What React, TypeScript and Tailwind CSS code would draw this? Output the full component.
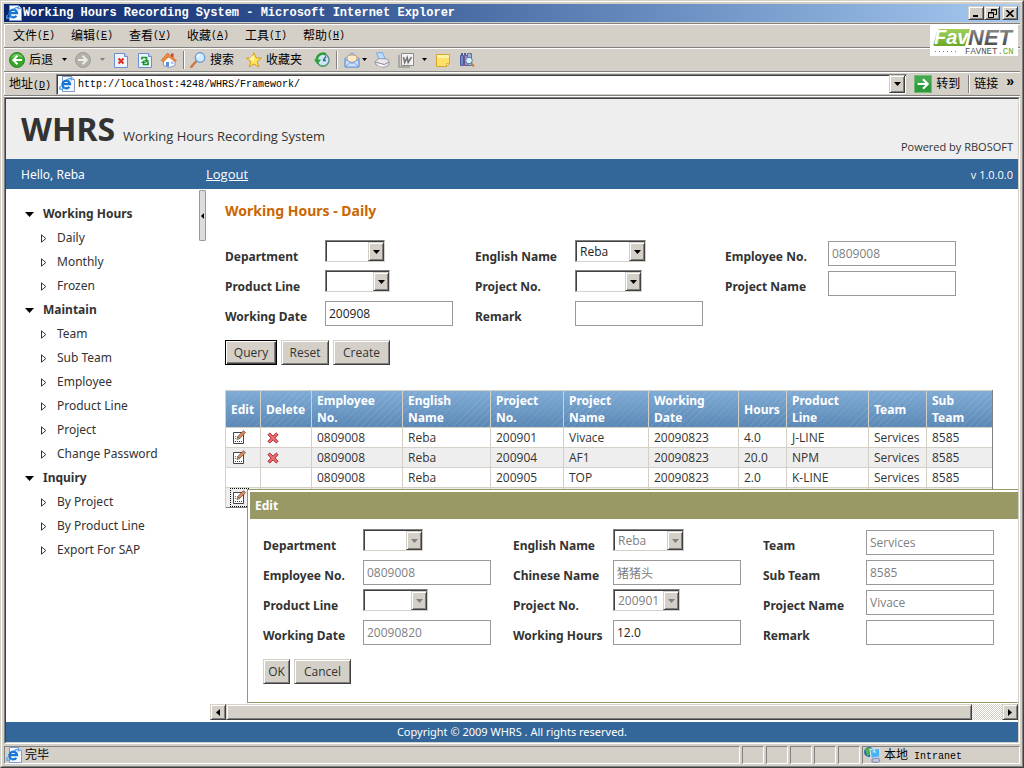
import React from "react";

const raised =
  "border border-t-[#d4d0c8] border-l-[#d4d0c8] border-r-[#404040] border-b-[#404040] bg-[#d4d0c8] shadow-[inset_1px_1px_0_#ffffff,inset_-1px_-1px_0_#808080]";
const sunken =
  "border border-t-[#808080] border-l-[#808080] border-r-[#d4d0c8] border-b-[#d4d0c8] bg-white shadow-[inset_1px_1px_0_#404040]";
const band = "flex h-6 items-center border-t border-[#808080] whitespace-nowrap shadow-[inset_0_1px_0_#ffffff,inset_1px_0_0_#ffffff]";
const noto = "font-['Noto_Sans','Noto_Sans_CJK_SC',sans-serif]";

/* ---------- icons ---------- */

function IEPage() {
  return (
    <svg width="16" height="16" viewBox="0 0 16 16" className="shrink-0">
      <path d="M3.500.5h9l3 3v12h-12z" fill="#f6f9ff" stroke="#7f9bd0" />
      <path d="M12.500.5v3h3" fill="#cfdcf5" stroke="#7f9bd0" />
      <path d="M10.300 10.800a3.800 3.800 0 1 1 .7-2.600H3.500" fill="none" stroke="#1874d2" strokeWidth="2.300" />
      <path d="M1.500 10C-1 14.500 2.500 14 6 11.800M7.500 4.300c3-2.300 5.500-2.800 4.500.2" fill="none" stroke="#4ba3ee" strokeWidth="1.300" />
    </svg>
  );
}

function BackIcon() {
  return (
    <svg width="16" height="16" viewBox="0 0 16 16" className="shrink-0">
      <circle cx="8" cy="8" r="7.500" fill="#3aa52d" stroke="#2b8a22" />
      <path d="M2 6a6.500 6.500 0 0 1 12 0c-3-2-8-2-12 0z" fill="#8fdc7c" opacity=".7" />
      <path d="M8.500 3.800 4.300 8l4.200 4.200M4.800 8H13" fill="none" stroke="#fff" strokeWidth="2" />
    </svg>
  );
}

function ForwardIcon() {
  return (
    <svg width="16" height="16" viewBox="0 0 16 16" className="shrink-0">
      <circle cx="8" cy="8" r="7.500" fill="#b4b1aa" stroke="#a09d96" />
      <path d="M7.500 3.800 11.700 8l-4.200 4.200M11.200 8H3" fill="none" stroke="#eeece7" strokeWidth="2" />
    </svg>
  );
}

function StopIcon() {
  return (
    <svg width="14" height="16" viewBox="0 0 14 16" className="shrink-0">
      <path d="M.5 1.500h10l3 3v11H.5z" fill="#eef4ff" stroke="#6d8fd2" />
      <path d="M10.500 1.500v3h3" fill="#c4d5f5" stroke="#6d8fd2" />
      <path d="m4.500 6.500 5 5m0-5-5 5" stroke="#e0301e" strokeWidth="2.200" />
    </svg>
  );
}

function RefreshIcon() {
  return (
    <svg width="14" height="16" viewBox="0 0 14 16" className="shrink-0">
      <path d="M.5 1.500h10l3 3v11H.5z" fill="#eef4ff" stroke="#6d8fd2" />
      <path d="M10.500 1.500v3h3" fill="#c4d5f5" stroke="#6d8fd2" />
      <path d="M4 7.500V5.500h4.500v3M10 9.500v3H5.500v-2" fill="none" stroke="#16962b" strokeWidth="1.700" />
      <path d="M5.800 8h5.400L8.500 10.500zM2.800 11h5.400L5.500 8.500z" fill="#16962b" />
    </svg>
  );
}

function HomeIcon() {
  return (
    <svg width="16" height="16" viewBox="0 0 16 16" className="shrink-0">
      <path d="M2.500 8.500v5l6 2 5.500-2V8L9 4z" fill="#fbfbff" stroke="#8b9bc4" />
      <path d="M10 1.500h2.500v4H10z" fill="#c8452b" />
      <path d="M0 8.500 6.500 1l9 7.500-1.800 1L7.500 4.800 2.500 10z" fill="#f0883a" stroke="#d0672a" strokeWidth=".6" />
      <path d="M5 10h3v5L5 14z" fill="#5b8fd8" />
      <path d="M10 9.500h2.500V12H10z" fill="#a5c8f2" />
    </svg>
  );
}

function SearchIcon() {
  return (
    <svg width="16" height="16" viewBox="0 0 16 16" className="shrink-0">
      <path d="M1.200 14.800 6 9.500" stroke="#c77b47" strokeWidth="2.500" strokeLinecap="round" />
      <circle cx="10" cy="5.500" r="4.700" fill="#d3ecff" stroke="#6d9ddb" strokeWidth="1.400" />
      <path d="M7.500 5A3 3 0 0 1 10 2.500" stroke="#fff" strokeWidth="1.500" fill="none" />
    </svg>
  );
}

function StarIcon() {
  return (
    <svg width="16" height="16" viewBox="0 0 16 16" className="shrink-0">
      <path d="m8 .8 2 5 5.400.3-4.200 3.500 1.500 5.400L8 12l-4.700 3 1.500-5.400L.6 6.100 6 5.800z" fill="#ffe45c" stroke="#d99a1c" />
      <path d="M8 3v6L3 7z" fill="#fff6b0" />
    </svg>
  );
}

function HistoryIcon() {
  return (
    <svg width="16" height="16" viewBox="0 0 16 16" className="shrink-0">
      <circle cx="9" cy="8" r="6" fill="#cfe6f5" stroke="#5f8f9c" strokeWidth="1.500" />
      <path d="M9 8.500l3-4M9 8.500h3" stroke="#35668c" strokeWidth="1.300" />
      <path d="M3 9A6 6 0 0 1 12 2.500" fill="none" stroke="#2ba03c" strokeWidth="2.600" />
      <path d="M0 7.500h7L3.500 12.500z" fill="#2ba03c" />
      <path d="M5 13c2 1.800 6 1.800 8-.5" fill="none" stroke="#58a868" strokeWidth="1.500" />
    </svg>
  );
}

function MailIcon() {
  return (
    <svg width="16" height="16" viewBox="0 0 16 16" className="shrink-0">
      <path d="M1 6.500 8 1l7 5.500V15H1z" fill="#b9d6f8" stroke="#6f97d0" />
      <path d="M3.500 3.500h9V10h-9z" fill="#ffe9c4" stroke="#d9a066" strokeWidth=".7" />
      <path d="M1.200 7 8 11.500 14.800 7v8H1.200z" fill="#c9e0ff" stroke="#6f97d0" />
      <path d="m1.500 14.500 5-4m8 4-5-4" stroke="#6f97d0" strokeWidth=".8" />
    </svg>
  );
}

function PrinterIcon() {
  return (
    <svg width="16" height="16" viewBox="0 0 16 16" className="shrink-0">
      <path d="m2.500 1 6-.5 2.500 6-6 1.500z" fill="#bcdcff" stroke="#6c9ad8" strokeWidth=".8" />
      <path d="M1 9.500 5 6.500l8.500.5 1.500 3v3l-5 2.500-8.500-3z" fill="#e8e8ec" stroke="#8c8c98" strokeWidth=".8" />
      <path d="m1.200 10 9 2.500L15 10" fill="none" stroke="#8c8c98" />
      <path d="M4 12.500 9 14" stroke="#fff" strokeWidth="1.500" />
    </svg>
  );
}

function WordIcon() {
  return (
    <svg width="16" height="16" viewBox="0 0 16 16" className="shrink-0">
      <path d="M3.500 1.500h12v12h-12z" fill="#f4f4f4" stroke="#8b8b8b" />
      <path d="M1 3v12h11" fill="none" stroke="#9b9b9b" strokeWidth="1.500" />
      <path d="m5.500 5 1.200 5.500L9.200 5.500l1 5L13.500 5" fill="none" stroke="#777" strokeWidth="1.600" />
    </svg>
  );
}

function NoteIcon() {
  return (
    <svg width="16" height="16" viewBox="0 0 16 16" className="shrink-0">
      <path d="M1.500 2.500h13v9l-3 3h-10z" fill="#ffe169" stroke="#d9a52c" />
      <path d="M14.500 11.500h-3v3z" fill="#fff7c9" stroke="#d9a52c" strokeWidth=".8" />
      <path d="M2 3h12v3H2z" fill="#fff3a8" />
    </svg>
  );
}

function ResearchIcon() {
  return (
    <svg width="16" height="16" viewBox="0 0 16 16" className="shrink-0">
      <path d="M1.500 3.500h3v10h-3z" fill="#7487c8" stroke="#4a5c9d" />
      <path d="M2 1h2v2H2zM5 1h2v2H5z" fill="#4a5c9d" />
      <path d="M5.500 3.500h3v10h-3z" fill="#a58cc0" stroke="#6b5591" />
      <path d="M8.500 1.500h4v12h-4z" fill="#9fb4dd" stroke="#58709f" />
      <circle cx="10" cy="8.500" r="3.300" fill="#d8f3ff" stroke="#4e7ba7" />
      <path d="m12.500 11.500 2.500 3" stroke="#c88332" strokeWidth="2" />
    </svg>
  );
}

function GoIcon() {
  return (
    <svg width="18" height="18" viewBox="0 0 18 18" className="shrink-0">
      <path d="M.5.5h17v17H.5z" fill="#2f9a3b" stroke="#6fba74" />
      <path d="M1 1h16v7H1z" fill="#55b35e" opacity=".6" />
      <path d="M9 4.200 13.800 9 9 13.800M13 9H3.500" fill="none" stroke="#fff" strokeWidth="2" />
    </svg>
  );
}

function IntranetIcon() {
  return (
    <svg width="17" height="16" viewBox="0 0 17 16" className="shrink-0">
      <circle cx="5" cy="5" r="4.900" fill="#2259c4" />
      <path d="M1 3c2-3 5-3 6-1L5 5l1 3-3 1z" fill="#46b648" />
      <path d="m6 2.500 9.500-1.500.5 9-9 1.500z" fill="#49b2f5" stroke="#d5daec" strokeWidth="1.300" />
      <path d="m8 5 3-2.500L12 6z" fill="#b8e6ff" />
      <path d="m8 12 6.500-1 1.500 3-3 1.500-5-.5z" fill="#c3c6e2" stroke="#7177a5" strokeWidth=".8" />
    </svg>
  );
}

function EditIcon() {
  return (
    <svg width="13" height="14" viewBox="0 0 13 14">
      <path d="M.5 2.500h10v11H.5z" fill="#fff" stroke="#444" />
      <path d="M2 11.500h1m1 0h1m1 0h1m1 0h1" stroke="#444" />
      <path d="M2 6.500h1M2 8.500h1" stroke="#777" />
      <path d="m4 9.500.7-2.700L6.500 8.700z" fill="#ffe79a" stroke="#444" strokeWidth=".7" />
      <path d="M4.800 6.500 10.500.7l2 2-5.900 5.800z" fill="#dd8a5c" stroke="#7b4a35" strokeWidth=".8" />
    </svg>
  );
}

function DeleteIcon() {
  return (
    <svg width="12" height="12" viewBox="0 0 12 12">
      <path d="M1 2.700 2.700 1 6 4.200 9.300 1 11 2.700 7.800 6 11 9.300 9.300 11 6 7.800 2.700 11 1 9.300 4.200 6z" fill="#f27070" stroke="#a8202c" strokeWidth="1" />
    </svg>
  );
}

function Caret({ className = "fill-black" }: { className?: string }) {
  return (
    <svg width="7" height="4" viewBox="0 0 7 4" className={"shrink-0 " + className}>
      <path d="M0 0h7L3.500 4z" />
    </svg>
  );
}

function SmallCaret({ className = "fill-black" }: { className?: string }) {
  return (
    <svg width="5" height="3" viewBox="0 0 5 3" className={"shrink-0 " + className}>
      <path d="M0 0h5L2.500 3z" />
    </svg>
  );
}

function FavnetLogo() {
  return (
    <svg width="88" height="31" viewBox="0 0 88 31" role="img" aria-label="FavNET">
      <defs>
        <linearGradient id="netFill" x1="0" y1="0" x2="0" y2="1">
          <stop offset="0" stopColor="#9a9a9a" />
          <stop offset="1" stopColor="#3b3b3b" />
        </linearGradient>
        <linearGradient id="favFill" x1="0" y1="0" x2="0" y2="1">
          <stop offset="0" stopColor="#9fd05c" />
          <stop offset="1" stopColor="#6aa829" />
        </linearGradient>
      </defs>
      <rect width="88" height="31" fill="#fff" />
      <path d="M10 4h30l-5 17H5q-2 0-1.500-2L7 6q.5-2 3-2z" fill="url(#favFill)" />
      <text x="4" y="19" className="font-['Liberation_Sans',sans-serif] text-[20px] font-bold italic" fill="#fff">Fav</text>
      <text x="38" y="20" className="font-['Liberation_Sans',sans-serif] text-[22px] font-bold italic" fill="url(#netFill)">NET</text>
      <path d="M5 26.500h24" stroke="#888" strokeDasharray="1 3" />
      <text x="35" y="29" className="font-['Liberation_Mono',monospace] text-[9px]" fill="#555">
        FAVNET<tspan fill="#6aa829">.CN</tspan>
      </text>
    </svg>
  );
}

/* ---------- browser chrome ---------- */

function Mono({ children }: { children: React.ReactNode }) {
  return <span className="font-['Liberation_Mono','Noto_Sans_CJK_SC',monospace] text-[10px]">{children}</span>;
}

function Divider() {
  return <span className="h-[18px] w-[2px] border-l border-r border-l-[#808080] border-r-white" />;
}

function TitleBar() {
  return (
    <header className="flex h-[18px] items-center gap-px bg-gradient-to-r from-[#0a246a] to-[#a6caf0] pr-[2px] pl-[2px]">
      <IEPage />
      <h1 className="flex-1 truncate font-['Liberation_Mono',monospace] text-xs leading-[18px] font-bold text-white">
        Working Hours Recording System - Microsoft Internet Explorer
      </h1>
      <div className="flex">
        <button aria-label="Minimize" className={"flex h-[14px] w-4 items-center justify-center " + raised}>
          <svg width="8" height="8" viewBox="0 0 8 8"><path d="M1 6h5v2H1z" /></svg>
        </button>
        <button aria-label="Restore" className={"flex h-[14px] w-4 items-center justify-center " + raised}>
          <svg width="9" height="9" viewBox="0 0 9 9">
            <path d="M3.500 2.500v-2h5v5h-2M.5 3.500h5v5h-5z M3 1h6M0 4h6" fill="none" stroke="#000" />
          </svg>
        </button>
        <button aria-label="Close" className={"ml-[2px] flex h-[14px] w-4 items-center justify-center " + raised}>
          <svg width="8" height="7" viewBox="0 0 8 7"><path d="m.5 0 7 7m0-7-7 7" stroke="#000" strokeWidth="1.600" /></svg>
        </button>
      </div>
    </header>
  );
}

const menus = [
  ["文件", "F"],
  ["编辑", "E"],
  ["查看", "V"],
  ["收藏", "A"],
  ["工具", "T"],
  ["帮助", "H"],
];

function MenuBar() {
  return (
    <nav className={band + " gap-4 pl-[9px]"}>
      {menus.map(([label, key]) => (
        <button key={key} className="flex w-[42px] shrink-0 items-center">
          {label}
          <Mono>(<span className="underline">{key}</span>)</Mono>
        </button>
      ))}
    </nav>
  );
}

function ToolBar() {
  return (
    <div className={band + " pl-[5px]"}>
      <button className="flex items-center gap-1"><BackIcon />后退</button>
      <SmallCaret className="mr-px ml-[9px] fill-black" />
      <button aria-label="Forward" className="ml-[7px]"><ForwardIcon /></button>
      <SmallCaret className="ml-[9px] fill-[#808080]" />
      <button aria-label="Stop" className="ml-[9px]"><StopIcon /></button>
      <button aria-label="Refresh" className="ml-[10px]"><RefreshIcon /></button>
      <button aria-label="Home" className="mr-[6px] ml-[9px]"><HomeIcon /></button>
      <Divider />
      <button className="ml-[5px] flex items-center gap-1"><SearchIcon />搜索</button>
      <button className="ml-3 flex items-center gap-1"><StarIcon />收藏夹</button>
      <button aria-label="History" className="mr-[6px] ml-3"><HistoryIcon /></button>
      <Divider />
      <button aria-label="Mail" className="ml-[6px] flex items-center gap-[2px]"><MailIcon /><SmallCaret /></button>
      <button aria-label="Print" className="ml-[7px]"><PrinterIcon /></button>
      <button aria-label="Edit with Word" className="ml-2 flex items-center gap-2"><WordIcon /><SmallCaret /></button>
      <button aria-label="Note" className="ml-2"><NoteIcon /></button>
      <button aria-label="Research" className="ml-2"><ResearchIcon /></button>
    </div>
  );
}

function AddressBar() {
  return (
    <div className={band + " pt-px pl-[5px]"}>
      <label htmlFor="address" className="w-[47px] shrink-0">地址<Mono>(<span className="underline">D</span>)</Mono></label>
      <div className={"flex h-[21px] flex-1 items-center p-px pl-[2px] " + sunken}>
        <IEPage />
        <input
          id="address"
          defaultValue="http://localhost:4248/WHRS/Framework/"
          className="ml-[3px] h-4 min-w-0 flex-1 bg-transparent font-['Liberation_Mono',monospace] text-[10px] outline-none"
        />
        <button aria-label="Address list" className={"flex h-[18px] w-4 items-center justify-center " + raised}>
          <Caret />
        </button>
      </div>
      <button className="ml-[7px] flex items-center gap-1"><GoIcon />转到</button>
      <span className="mr-1 ml-2 flex"><Divider /></span>
      <button className="mr-2">链接</button>
      <button aria-label="More links" className="mr-[6px] self-start text-sm leading-4 font-bold">»</button>
    </div>
  );
}

function StatusBar() {
  const cell = "border border-t-[#808080] border-l-[#808080] border-r-white border-b-white";
  return (
    <footer className="mt-[2px] flex h-[18px] gap-[2px]">
      <div className={"flex flex-1 items-center gap-[3px] pl-px " + cell}><IEPage />完毕</div>
      {[0, 1, 2, 3, 4].map((n) => (
        <div key={n} className={"w-[22px] " + cell} />
      ))}
      <div className={"flex w-[158px] items-center gap-[3px] pl-px " + cell}>
        <IntranetIcon />
        <span>本地<Mono>&nbsp;Intranet</Mono></span>
      </div>
    </footer>
  );
}

/* ---------- form parts ---------- */

type FieldSpec = {
  label: string;
  kind: "select" | "input";
  value?: string;
  width?: string;
  disabled?: boolean;
};

function Field({ id, spec }: { id: string; spec: FieldSpec }) {
  const tone = spec.disabled ? "text-[#808080]" : "text-[#222]";
  return (
    <>
      <label htmlFor={id} className={"pt-2 leading-[18px] font-bold whitespace-nowrap " + noto}>{spec.label}</label>
      {spec.kind === "select" ? (
        <div className={"relative h-[22px] " + spec.width}>
          <select
            id={id}
            disabled={spec.disabled}
            defaultValue={spec.value ?? ""}
            className={"h-full w-full appearance-none rounded-none pt-px pl-1 text-xs leading-[18px] opacity-100 outline-none " + sunken + " " + tone}
          >
            <option value={spec.value ?? ""}>{spec.value ?? ""}</option>
          </select>
          <span className={"pointer-events-none absolute top-[2px] right-px flex h-[19px] w-4 items-center justify-center " + raised}>
            <Caret className={spec.disabled ? "fill-[#808080]" : "fill-black"} />
          </span>
        </div>
      ) : (
        <input
          id={id}
          disabled={spec.disabled}
          defaultValue={spec.value}
          className={"mt-px h-[25px] w-32 border border-[#999] bg-white px-[3px] text-xs outline-none " + tone}
        />
      )}
    </>
  );
}

function Form({ name, fields }: { name: string; fields: FieldSpec[] }) {
  return (
    <div className="grid auto-rows-[30px] grid-cols-[100px_150px_100px_150px_103px_128px] items-start">
      {fields.map((f, i) => (
        <Field key={i} id={name + "-" + i} spec={f} />
      ))}
    </div>
  );
}

const queryFields: FieldSpec[] = [
  { label: "Department", kind: "select", width: "w-[60px]" },
  { label: "English Name", kind: "select", value: "Reba", width: "w-[71px]" },
  { label: "Employee No.", kind: "input", value: "0809008", disabled: true },
  { label: "Product Line", kind: "select", width: "w-[65px]" },
  { label: "Project No.", kind: "select", width: "w-[67px]" },
  { label: "Project Name", kind: "input" },
  { label: "Working Date", kind: "input", value: "200908" },
  { label: "Remark", kind: "input" },
];

const editFields: FieldSpec[] = [
  { label: "Department", kind: "select", width: "w-[60px]", disabled: true },
  { label: "English Name", kind: "select", value: "Reba", width: "w-[71px]", disabled: true },
  { label: "Team", kind: "input", value: "Services", disabled: true },
  { label: "Employee No.", kind: "input", value: "0809008", disabled: true },
  { label: "Chinese Name", kind: "input", value: "猪猪头", disabled: true },
  { label: "Sub Team", kind: "input", value: "8585", disabled: true },
  { label: "Product Line", kind: "select", width: "w-[65px]", disabled: true },
  { label: "Project No.", kind: "select", value: "200901", width: "w-[67px]", disabled: true },
  { label: "Project Name", kind: "input", value: "Vivace", disabled: true },
  { label: "Working Date", kind: "input", value: "20090820", disabled: true },
  { label: "Working Hours", kind: "input", value: "12.0" },
  { label: "Remark", kind: "input" },
];

/* ---------- application ---------- */

const tree = [
  { title: "Working Hours", items: ["Daily", "Monthly", "Frozen"] },
  { title: "Maintain", items: ["Team", "Sub Team", "Employee", "Product Line", "Project", "Change Password"] },
  { title: "Inquiry", items: ["By Project", "By Product Line", "Export For SAP"] },
];

function Sidebar() {
  return (
    <nav className={"w-[193px] shrink-0 pt-[13px] pl-[19px] " + noto}>
      {tree.map((group) => (
        <section key={group.title}>
          <h3 className="flex h-6 items-center gap-[9px] font-bold">
            <svg width="9" height="5" viewBox="0 0 9 5"><path d="M0 0h9L4.500 5z" /></svg>
            {group.title}
          </h3>
          <ul>
            {group.items.map((item) => (
              <li key={item} className="flex h-6 items-center gap-[10px] pl-4">
                <svg width="6" height="9" viewBox="0 0 6 9">
                  <path d="M.5.800v7.400L4.800 4.500z" fill="none" stroke="#333" />
                </svg>
                <a href="#">{item}</a>
              </li>
            ))}
          </ul>
        </section>
      ))}
    </nav>
  );
}

const columns = [
  { title: "Edit", width: "w-[35px]" },
  { title: "Delete", width: "w-[51px]" },
  { title: "Employee No.", width: "w-[91px]" },
  { title: "English Name", width: "w-[88px]" },
  { title: "Project No.", width: "w-[73px]" },
  { title: "Project Name", width: "w-[85px]" },
  { title: "Working Date", width: "w-[90px]" },
  { title: "Hours", width: "w-[48px]" },
  { title: "Product Line", width: "w-[82px]" },
  { title: "Team", width: "w-[58px]" },
  { title: "Sub Team", width: "w-[66px]" },
];

const rows = [
  { editable: true, removable: true, cells: ["0809008", "Reba", "200901", "Vivace", "20090823", "4.0", "J-LINE", "Services", "8585"] },
  { editable: true, removable: true, cells: ["0809008", "Reba", "200904", "AF1", "20090823", "20.0", "NPM", "Services", "8585"] },
  { editable: false, removable: false, cells: ["0809008", "Reba", "200905", "TOP", "20090823", "2.0", "K-LINE", "Services", "8585"] },
  { editable: true, removable: false, focused: true, cells: ["", "", "", "", "", "", "", "", ""] },
];

function ResultTable() {
  return (
    <table className="mt-[25px] w-[767px] table-fixed border-collapse border border-t-[#d4d0c8] border-r-[#808080] border-b-[#808080] border-l-[#d4d0c8]">
      <colgroup>
        {columns.map((c) => (
          <col key={c.title} className={c.width} />
        ))}
      </colgroup>
      <thead className="bg-[repeating-linear-gradient(135deg,rgba(255,255,255,0.08)_0px_1px,transparent_1px_5px),linear-gradient(#7fabd6,#5a87b4)]">
        <tr className="h-[37px]">
          {columns.map((c) => (
            <th key={c.title} className={"border-r border-[#d4d0c8] px-[5px] text-left leading-[17px] font-bold text-white last:border-[#808080] " + noto}>
              {c.title}
            </th>
          ))}
        </tr>
      </thead>
      <tbody>
        {rows.map((r, i) => (
          <tr key={i} className="h-5 even:bg-[#eeeeee]">
            <td className="border border-b-0 border-[#d4d0c8] px-[5px] py-0">
              {r.editable && (
                <button aria-label="Edit row" className={"flex h-[17px] w-[17px] items-center pb-px pl-[2px] " + (r.focused ? "outline-1 outline-dotted outline-black" : "")}>
                  <EditIcon />
                </button>
              )}
            </td>
            <td className="border border-b-0 border-[#d4d0c8] px-[6px] py-0">
              {r.removable && <button aria-label="Delete row" className="flex"><DeleteIcon /></button>}
            </td>
            {r.cells.map((cell, j) => (
              <td key={j} className="border border-b-0 border-[#d4d0c8] px-[5px] py-0 leading-[19px] whitespace-nowrap last:border-r-[#808080]">
                {cell}
              </td>
            ))}
          </tr>
        ))}
      </tbody>
    </table>
  );
}

function PushButton({ children, wide, primary = false }: { children: string; wide: string; primary?: boolean }) {
  return (
    <button
      className={
        "h-[25px] text-xs " + wide + " " +
        (primary
          ? "border border-black bg-[#d4d0c8] shadow-[inset_1px_1px_0_#ffffff,inset_-1px_-1px_0_#404040,inset_-2px_-2px_0_#808080]"
          : raised)
      }
    >
      {children}
    </button>
  );
}

function EditDialog() {
  return (
    <section role="dialog" aria-label="Edit" className="absolute top-[300px] -right-1 left-[37px] border border-[#999966] bg-white p-[2px]">
      <h3 className={"h-[27px] bg-[#999966] pl-[5px] leading-[27px] font-bold text-white " + noto}>Edit</h3>
      <div className="px-[13px] pt-[10px] pb-4">
        <Form name="edit" fields={editFields} />
        <div className="mt-[10px] flex gap-1">
          <PushButton wide="w-[27px]">OK</PushButton>
          <PushButton wide="w-[57px]">Cancel</PushButton>
        </div>
      </div>
    </section>
  );
}

function ScrollBar() {
  return (
    <div className="mb-[2px] flex h-4 bg-[conic-gradient(#d4d0c8_25%,#ffffff_0_50%,#d4d0c8_0_75%,#ffffff_0)] bg-[size:2px_2px]">
      <button aria-label="Scroll left" className={"flex w-4 items-center justify-center " + raised}>
        <svg width="4" height="7" viewBox="0 0 4 7"><path d="M4 0v7L0 3.500z" /></svg>
      </button>
      <div className={"mr-[30px] flex-1 " + raised} />
      <button aria-label="Scroll right" className={"flex w-4 items-center justify-center " + raised}>
        <svg width="4" height="7" viewBox="0 0 4 7"><path d="M0 0v7l4-3.500z" /></svg>
      </button>
    </div>
  );
}

function Page() {
  return (
    <div className="flex flex-1 flex-col bg-white font-['Open_Sans','Noto_Sans_CJK_SC',sans-serif] text-xs text-[#333]">
      <div className="flex h-[60px] items-end justify-between bg-[#eeeeee] pr-[5px] pl-[15px]">
        <div className="flex items-baseline gap-2 pb-2">
          <strong className={"text-[32px] leading-[44px] " + noto}>WHRS</strong>
          <span className="text-[13px]">Working Hours Recording System</span>
        </div>
        <span className="pb-1 text-[11px]">Powered by RBOSOFT</span>
      </div>
      <div className="flex h-[30px] items-center bg-[#336699] pt-[2px] pr-[5px] pl-[15px] text-white">
        <span className={"w-[185px] " + noto}>Hello, Reba</span>
        <a href="#" className="flex-1 text-[13px] underline">Logout</a>
        <span className="text-[11px]">v 1.0.0.0</span>
      </div>
      <main className="flex flex-1">
        <Sidebar />
        <button aria-label="Collapse menu" className="mt-px mr-1 flex h-[51px] w-[7px] shrink-0 items-center justify-center rounded-[1px] border border-[#999] bg-[#dcdcdc]">
          <svg width="3" height="6" viewBox="0 0 3 6"><path d="M3 0v6L0 3z" /></svg>
        </button>
        <div className="flex min-w-0 flex-1 flex-col">
          <div className="relative min-h-[515px] flex-1 overflow-hidden pt-3 pl-[15px]">
            <h2 className={"mb-[19px] text-sm leading-5 font-bold text-[#cc6600] " + noto}>Working Hours - Daily</h2>
            <Form name="query" fields={queryFields} />
            <div className="mt-[10px] flex gap-1">
              <PushButton primary wide="w-[52px]">Query</PushButton>
              <PushButton wide="w-[48px]">Reset</PushButton>
              <PushButton wide="w-[57px]">Create</PushButton>
            </div>
            <ResultTable />
            <EditDialog />
          </div>
          <ScrollBar />
        </div>
      </main>
      <div className={"h-5 bg-[#336699] text-center text-[11px] leading-5 text-white " + noto}>
        Copyright © 2009 WHRS . All rights reserved.
      </div>
    </div>
  );
}

export default function App() {
  return (
    <div className="flex min-h-screen flex-col border border-t-[#d4d0c8] border-r-[#404040] border-b-[#404040] border-l-[#d4d0c8] bg-[#d4d0c8] font-['Liberation_Sans','Noto_Sans_CJK_SC',sans-serif] text-xs text-black">
      <div className="flex flex-1 flex-col border border-t-white border-r-[#808080] border-b-[#808080] border-l-white p-[2px]">
        <TitleBar />
        <div className="relative mt-px">
          <MenuBar />
          <ToolBar />
          <AddressBar />
          <div className="absolute top-[2px] right-[2px]"><FavnetLogo /></div>
          <div className="h-[2px] border-t border-b border-t-[#808080] border-b-white" />
        </div>
        <div className="flex flex-1 flex-col border border-t-[#808080] border-r-white border-b-white border-l-[#808080]">
          <div className="flex flex-1 flex-col border border-t-[#404040] border-r-[#d4d0c8] border-b-[#d4d0c8] border-l-[#404040]">
            <Page />
          </div>
        </div>
        <StatusBar />
      </div>
    </div>
  );
}
